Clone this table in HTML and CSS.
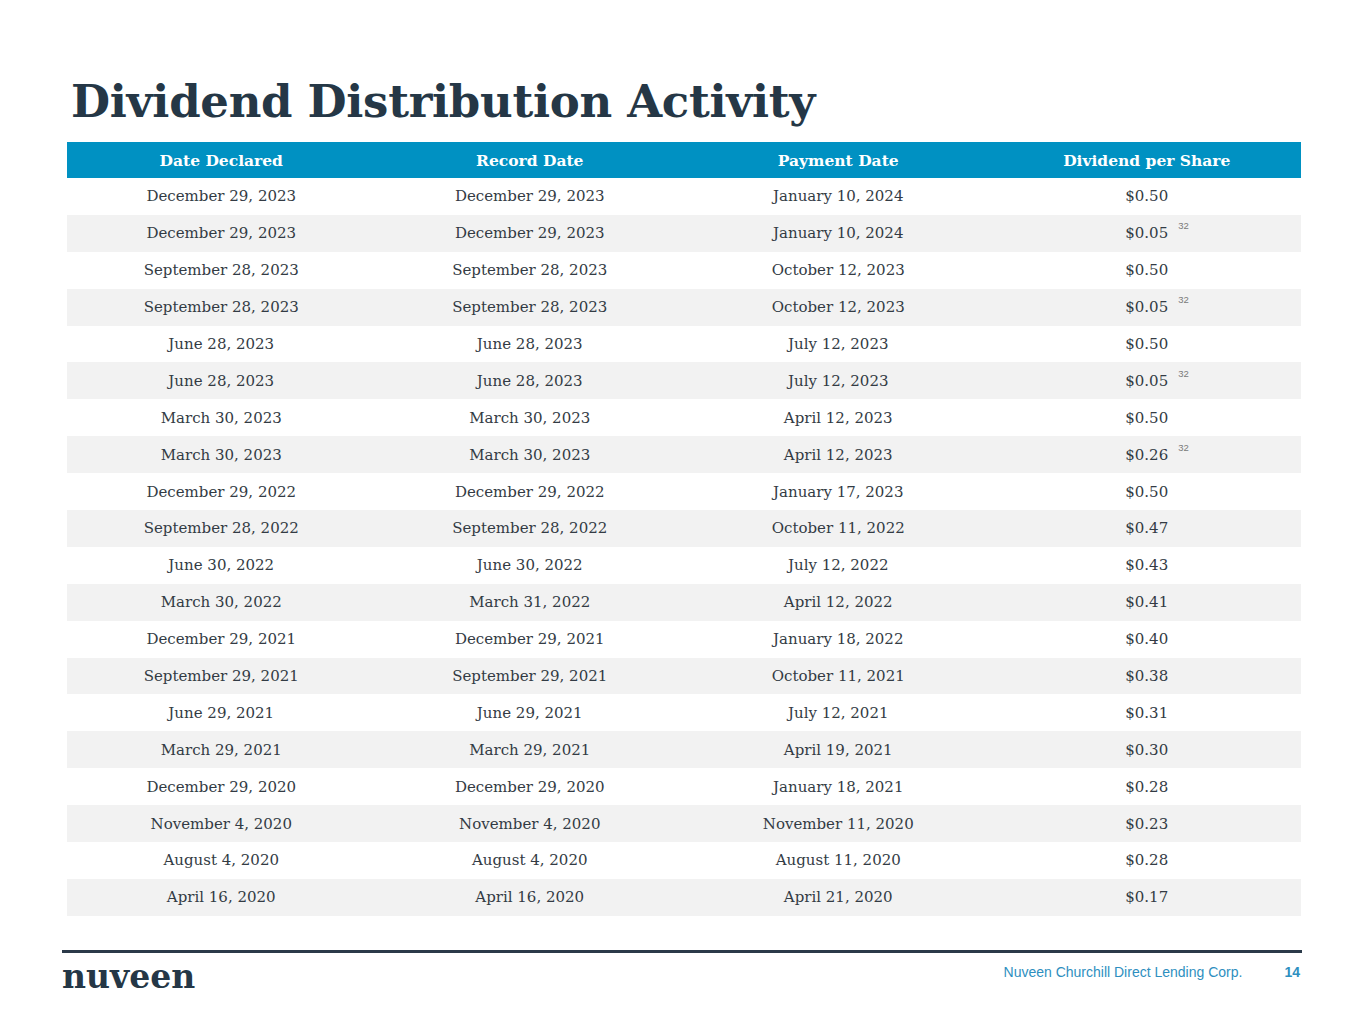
FILE: index.html
```html
<!DOCTYPE html>
<html>
<head>
<meta charset="utf-8">
<link rel="stylesheet" href="styles.css">
</head>
<body>
<div class="slide">
  <h1 class="title">Dividend Distribution Activity</h1>
  <table class="div-table">
    <thead>
      <tr><th>Date Declared</th><th>Record Date</th><th>Payment Date</th><th>Dividend per Share</th></tr>
    </thead>
    <tbody>
      <tr><td>December 29, 2023</td><td>December 29, 2023</td><td>January 10, 2024</td><td>$0.50</td></tr>
      <tr><td>December 29, 2023</td><td>December 29, 2023</td><td>January 10, 2024</td><td><span class="amt">$0.05<sup class="note">32</sup></span></td></tr>
      <tr><td>September 28, 2023</td><td>September 28, 2023</td><td>October 12, 2023</td><td>$0.50</td></tr>
      <tr><td>September 28, 2023</td><td>September 28, 2023</td><td>October 12, 2023</td><td><span class="amt">$0.05<sup class="note">32</sup></span></td></tr>
      <tr><td>June 28, 2023</td><td>June 28, 2023</td><td>July 12, 2023</td><td>$0.50</td></tr>
      <tr><td>June 28, 2023</td><td>June 28, 2023</td><td>July 12, 2023</td><td><span class="amt">$0.05<sup class="note">32</sup></span></td></tr>
      <tr><td>March 30, 2023</td><td>March 30, 2023</td><td>April 12, 2023</td><td>$0.50</td></tr>
      <tr><td>March 30, 2023</td><td>March 30, 2023</td><td>April 12, 2023</td><td><span class="amt">$0.26<sup class="note">32</sup></span></td></tr>
      <tr><td>December 29, 2022</td><td>December 29, 2022</td><td>January 17, 2023</td><td>$0.50</td></tr>
      <tr><td>September 28, 2022</td><td>September 28, 2022</td><td>October 11, 2022</td><td>$0.47</td></tr>
      <tr><td>June 30, 2022</td><td>June 30, 2022</td><td>July 12, 2022</td><td>$0.43</td></tr>
      <tr><td>March 30, 2022</td><td>March 31, 2022</td><td>April 12, 2022</td><td>$0.41</td></tr>
      <tr><td>December 29, 2021</td><td>December 29, 2021</td><td>January 18, 2022</td><td>$0.40</td></tr>
      <tr><td>September 29, 2021</td><td>September 29, 2021</td><td>October 11, 2021</td><td>$0.38</td></tr>
      <tr><td>June 29, 2021</td><td>June 29, 2021</td><td>July 12, 2021</td><td>$0.31</td></tr>
      <tr><td>March 29, 2021</td><td>March 29, 2021</td><td>April 19, 2021</td><td>$0.30</td></tr>
      <tr><td>December 29, 2020</td><td>December 29, 2020</td><td>January 18, 2021</td><td>$0.28</td></tr>
      <tr><td>November 4, 2020</td><td>November 4, 2020</td><td>November 11, 2020</td><td>$0.23</td></tr>
      <tr><td>August 4, 2020</td><td>August 4, 2020</td><td>August 11, 2020</td><td>$0.28</td></tr>
      <tr><td>April 16, 2020</td><td>April 16, 2020</td><td>April 21, 2020</td><td>$0.17</td></tr>
    </tbody>
  </table>
  <footer class="footer">
    <div class="logo">nuveen</div>
    <div class="foot-right">
      <span class="company">Nuveen Churchill Direct Lending Corp.</span>
      <span class="page">14</span>
    </div>
  </footer>
</div>
</body>
</html>
```
FILE: styles.css
```css
html, body {
  margin: 0;
  padding: 0;
  background: #ffffff;
}
.slide {
  width: 1365px;
  height: 1024px;
  box-sizing: border-box;
  padding: 74px 0 0 0;
  font-family: "DejaVu Serif", Georgia, serif;
}
.title {
  margin: 0 0 0 71px;
  font-family: "DejaVu Serif", Georgia, serif;
  font-weight: bold;
  font-size: 45px;
  line-height: 56px;
  color: #253746;
  letter-spacing: -0.3px;
}
.div-table {
  margin: 12px 0 0 67px;
  width: 1234px;
  border-collapse: collapse;
  table-layout: fixed;
}
.div-table th {
  background: #0091c2;
  color: #ffffff;
  font-weight: bold;
  font-size: 15.5px;
  height: 36px;
  padding: 0;
  text-align: center;
}
.div-table td {
  height: 36.9px;
  padding: 0;
  text-align: center;
  font-size: 15px;
  color: #333b44;
}
.div-table tbody tr:nth-child(even) td {
  background: #f2f2f2;
}
.amt {
  position: relative;
}
.note {
  position: absolute;
  left: calc(100% + 10px);
  top: -3px;
  font-family: "Liberation Sans", Arial, sans-serif;
  font-size: 9.5px;
  color: #7a7a7a;
  line-height: 1;
}
.footer {
  margin: 34px 63px 0 62px;
  border-top: 3px solid #2b3a49;
  display: flex;
  justify-content: space-between;
  align-items: flex-start;
  padding-top: 5px;
}
.logo {
  font-family: "DejaVu Serif", Georgia, serif;
  font-weight: bold;
  font-size: 33px;
  line-height: 38px;
  color: #253746;
}
.foot-right {
  display: flex;
  gap: 42px;
  padding-top: 6px;
  padding-right: 2px;
  font-family: "Liberation Sans", Arial, sans-serif;
  font-size: 14px;
  color: #2e8fc0;
}
.page {
  font-weight: bold;
}
```
